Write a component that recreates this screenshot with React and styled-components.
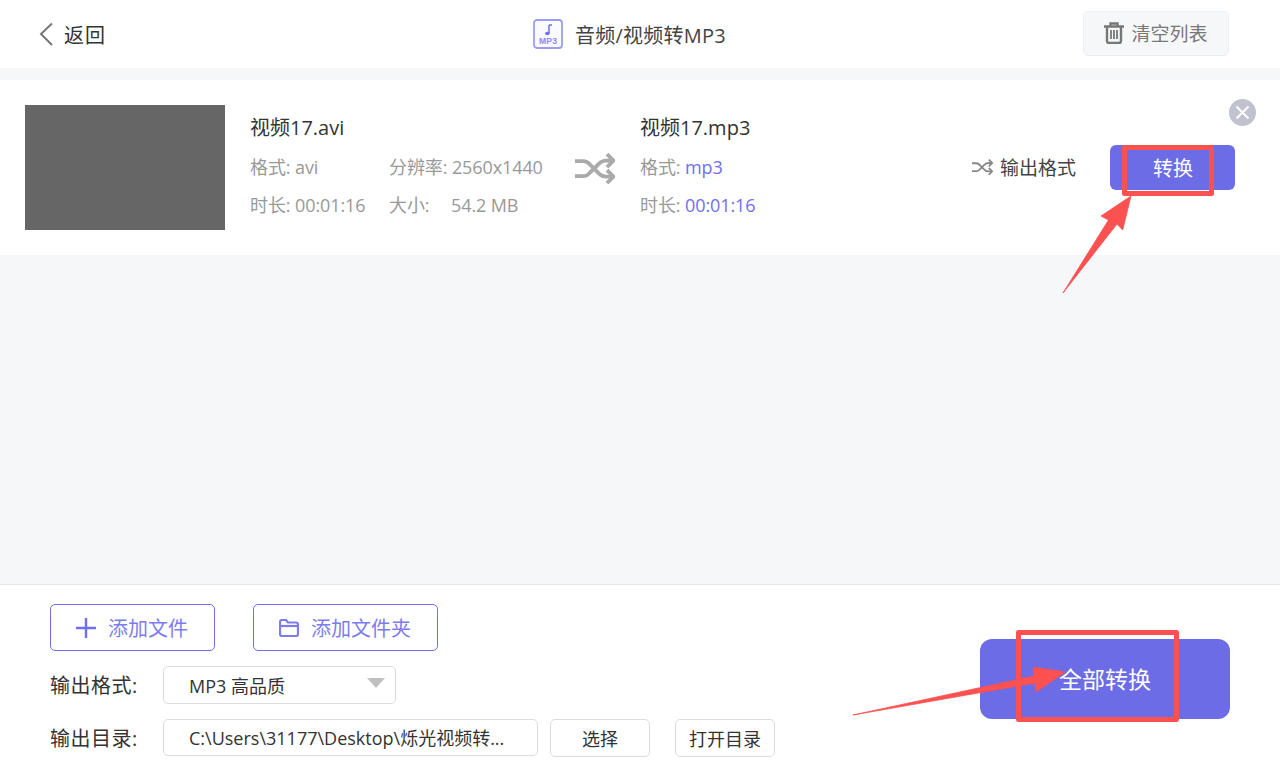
import React from 'react';
import styled, { createGlobalStyle } from 'styled-components';

const Global = createGlobalStyle`
  html, body { margin: 0; padding: 0; background: #f6f7f9; }
  * { box-sizing: border-box; }
  body { font-family: "Open Sans", "Noto Sans CJK SC", sans-serif; color: #333; }
`;
const Page = styled.div`
  width: 1280px; height: 770px; display: flex; flex-direction: column; position: relative; overflow: hidden;
`;
const Header = styled.header`
  height: 68px; background: #fff; display: grid; grid-template-columns: 1fr auto 1fr; align-items: center; padding: 0 51px 0 38px;
`;
const Back = styled.div`
  display: flex; align-items: center; gap: 8px; font-size: 20px; letter-spacing: 1px; color: #333;
`;
const Title = styled.div`
  display: flex; align-items: center; gap: 12px; font-size: 20px; letter-spacing: 0.25px; color: #444; margin-left: -8px;
`;
const ClearBtn = styled.div`
  justify-self: end; width: 146px; height: 45px; margin-top: -2px; border: 1px solid #eceef1; border-radius: 5px; background: #f6f7f9;
  display: flex; align-items: center; justify-content: center; gap: 7px; font-size: 19px; color: #777;
`;
const List = styled.main`
  flex: 1; padding-top: 12px; min-height: 0;
`;
const Card = styled.section`
  height: 175px; background: #fff; position: relative; display: flex; align-items: center; padding: 0 45px 0 25px;
`;
const Thumb = styled.div`
  width: 200px; height: 125px; background: #666; flex: none;
`;
const Info = styled.div`
  margin-left: ${p => p.$ml}px; width: ${p => p.$w}px; flex: none; display: flex; flex-direction: column; gap: 10px; margin-top: -2px;
`;
const Name = styled.div`
  font-size: 20px; line-height: 27px; color: #333; white-space: nowrap; margin-bottom: 2px;
`;
const MetaRow = styled.div`
  display: grid; grid-template-columns: ${p => p.$cols || '1fr'}; font-size: 18px; line-height: 28px; letter-spacing: -0.1px; color: #999; white-space: nowrap;
`;
const Key = styled.span`
  display: inline-block; width: 62px;
`;
const Accent = styled.span`
  color: #6f6ff0;
`;
const Arrows = styled.div`
  margin-left: 32px; width: 40px; flex: none; display: flex; margin-top: 2px;
`;
const Actions = styled.div`
  margin-left: auto; display: flex; align-items: center; gap: 34px; margin-top: -1px;
`;
const FormatLink = styled.div`
  display: flex; align-items: center; gap: 7px; font-size: 19px; color: #444;
`;
const ConvertBtn = styled.div`
  width: 125px; height: 45px; border-radius: 6px; background: #6c6ce6; color: #fff; font-size: 20px;
  display: flex; align-items: center; justify-content: center; padding-left: 1px;
`;
const Close = styled.div`
  position: absolute; top: 19px; right: 24px; width: 27px; height: 27px; border-radius: 50%; background: #c0c3ce;
  display: flex; align-items: center; justify-content: center;
`;
const Footer = styled.footer`
  height: 186px; background: #fff; border-top: 1px solid #e8e8ea; padding: 19px 50px 0; display: flex; justify-content: space-between;
`;
const Controls = styled.div`
  display: flex; flex-direction: column;
`;
const AddRow = styled.div`
  display: flex; gap: 38px; margin-bottom: 15px;
`;
const AddBtn = styled.div`
  width: ${p => p.$w}px; height: 47px; border: 1px solid #6f6ff0; border-radius: 5px; color: #7c7cf0; font-size: 20px;
  display: flex; align-items: center; justify-content: center; gap: ${p => p.$gap}px; padding-right: 1px;
`;
const FieldRow = styled.div`
  display: flex; align-items: flex-start; height: ${p => p.$h}px; margin-bottom: ${p => p.$mb || 0}px; font-size: 18px;
`;
const Label = styled.div`
  width: 113px; font-size: 20px; line-height: 38px; letter-spacing: 0.5px; color: #333; flex: none; margin-top: 1px;
`;
const Select = styled.div`
  width: 233px; height: 38px; border: 1px solid #dcdcdc; border-radius: 5px; padding: 0 10px 0 25px;
  display: flex; align-items: center; justify-content: space-between; color: #333;
`;
const Caret = styled.span`
  width: 0; height: 0; border-left: 9px solid transparent; border-right: 9px solid transparent; border-top: 10px solid #c0c0c0; margin-top: -5px;
`;
const PathBox = styled.div`
  width: 375px; height: 37px; border: 1px solid #dcdcdc; border-radius: 5px; padding: 0 25px 1px; display: flex; align-items: center; color: #333; white-space: nowrap;
`;
const SmallBtn = styled.div`
  width: 100px; height: 38px; border: 1px solid #dcdcdc; border-radius: 5px; display: flex; align-items: center; justify-content: center; margin-left: ${p => p.$ml}px; color: #333;
`;
const BigBtn = styled.div`
  width: 250px; height: 80px; margin-top: 35px; border-radius: 12px; background: #6c6ce6; color: #fff; font-size: 23px; padding-bottom: 2px;
  display: flex; align-items: center; justify-content: center;
`;
const Annotations = styled.svg`
  position: absolute; left: 0; top: 0; width: 1280px; height: 770px; pointer-events: none;
`;

const Shuffle = ({ size, sw, color }) => (
  <svg width={size} height={size * 0.78} viewBox="0 0 40 31" fill="none" stroke={color} strokeWidth={sw}>
    <path d="M0 8h8c3 0 5 1 7 3.500l9 9c2 2 4 3 7 3h7" />
    <path d="M0 23h8c3 0 5-1 7-3.500l9-9c2-2 4-3 7-3h7" />
    <path d="M32 1l6.500 6.500-6.500 6.500M32 17l6.500 6.500-6.500 6.500" />
  </svg>
);

export default function App() {
  return (
    <Page>
      <Global />
      <Header>
        <Back>
          <svg width="18" height="24" viewBox="0 0 18 24" fill="none" stroke="#777" strokeWidth="2"><path d="M14 1.500L3 12l11 11" /></svg>
          返回
        </Back>
        <Title>
          <svg width="30" height="30" viewBox="0 0 30 30" fill="none">
            <rect x="1" y="1" width="28" height="28" rx="3" stroke="#9b9df5" strokeWidth="1.800" fill="#fafaff" />
            <path d="M16 6v8.500M16 6h3" stroke="#6f6ff0" strokeWidth="1.500" />
            <ellipse cx="14.300" cy="14.500" rx="2.200" ry="1.700" fill="#6f6ff0" />
            <text x="15" y="25" textAnchor="middle" fontSize="8.500" fontWeight="700" fill="#8a8cf3" fontFamily="Liberation Sans, sans-serif">MP3</text>
          </svg>
          音频/视频转MP3
        </Title>
        <ClearBtn>
          <svg width="20" height="22" viewBox="0 0 20 22" fill="none" stroke="#777" strokeWidth="2.400">
            <path d="M0 4.500h20M6.500 4V1.500h7V4" />
            <path d="M3 5v14a2 2 0 0 0 2 2h10a2 2 0 0 0 2-2V5" />
            <path d="M7 8v9M10 8v9M13 8v9" strokeWidth="1.800" />
          </svg>
          清空列表
        </ClearBtn>
      </Header>
      <List>
        <Card>
          <Thumb />
          <Info $ml={25} $w={293}>
            <Name>视频17.avi</Name>
            <MetaRow $cols="139px 1fr"><span>格式: avi</span><span>分辨率: 2560x1440</span></MetaRow>
            <MetaRow $cols="139px 1fr"><span>时长: 00:01:16</span><span><Key>大小:</Key>54.2 MB</span></MetaRow>
          </Info>
          <Arrows><Shuffle size={40} sw={3.800} color="#aaaaaa" /></Arrows>
          <Info $ml={25} $w={160}>
            <Name>视频17.mp3</Name>
            <MetaRow><span>格式: <Accent>mp3</Accent></span></MetaRow>
            <MetaRow><span>时长: <Accent>00:01:16</Accent></span></MetaRow>
          </Info>
          <Actions>
            <FormatLink><Shuffle size={21} sw={3.400} color="#888" />输出格式</FormatLink>
            <ConvertBtn>转换</ConvertBtn>
          </Actions>
          <Close>
            <svg width="15" height="15" viewBox="0 0 15 15" stroke="#fff" strokeWidth="2"><path d="M1.500 1.500l12 12M13.500 1.500l-12 12" /></svg>
          </Close>
        </Card>
      </List>
      <Footer>
        <Controls>
          <AddRow>
            <AddBtn $w={165} $gap={12}>
              <svg width="20" height="20" viewBox="0 0 20 20" stroke="#6f6ff0" strokeWidth="2.400"><path d="M10 0v20M0 10h20" /></svg>
              添加文件
            </AddBtn>
            <AddBtn $w={185} $gap={12}>
              <svg width="20" height="18" viewBox="0 0 20 18" fill="none" stroke="#7c7cf0" strokeWidth="2.200">
                <path d="M1 15V3a2 2 0 0 1 2-2h4l2 2.500h8a2 2 0 0 1 2 2V15a2 2 0 0 1-2 2H3a2 2 0 0 1-2-2z" />
                <path d="M1 7h18" />
              </svg>
              添加文件夹
            </AddBtn>
          </AddRow>
          <FieldRow $h={38} $mb={15}>
            <Label>输出格式:</Label>
            <Select>MP3 高品质<Caret /></Select>
          </FieldRow>
          <FieldRow $h={38}>
            <Label>输出目录:</Label>
            <PathBox>C:\Users\31177\Desktop\烁光视频转...</PathBox>
            <SmallBtn $ml={12}>选择</SmallBtn>
            <SmallBtn $ml={25}>打开目录</SmallBtn>
          </FieldRow>
        </Controls>
        <BigBtn>全部转换</BigBtn>
      </Footer>
      <Annotations viewBox="0 0 1280 770">
        <rect x="1124.500" y="147.500" width="87" height="46" fill="none" stroke="#fb5150" strokeWidth="5" strokeLinejoin="round" />
        <polygon fill="#fb5150" stroke="#fb5150" strokeWidth="0.800" strokeLinejoin="round" points="1063,293 1108.500,220 1101,216 1131,196 1122.700,230 1117,224" />
        <rect x="1018.500" y="632.500" width="158" height="87" fill="none" stroke="#fb5150" strokeWidth="5" strokeLinejoin="round" />
        <polygon fill="#fb5150" stroke="#fb5150" strokeWidth="0.800" strokeLinejoin="round" points="853,715 1034,676 1033,667 1065,672 1036,692 1035,683" />
      </Annotations>
    </Page>
  );
}
